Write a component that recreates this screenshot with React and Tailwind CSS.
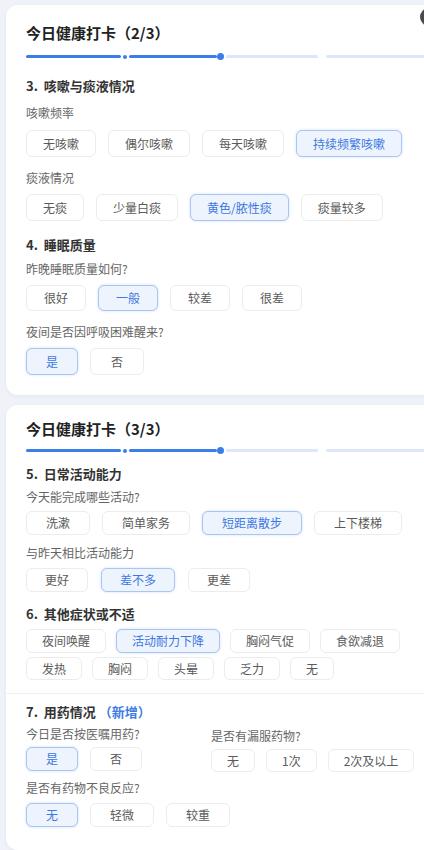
import React from "react";

const font = { fontFamily: '"Noto Sans CJK SC", "Noto Sans", sans-serif' };

// one option chip; pad carries the horizontal padding for that row
const Chip = ({ label, on, pad, h }) => (
  <div
    className={
      "flex items-center justify-center rounded-md border text-[12px] whitespace-nowrap " +
      pad +
      " " +
      h +
      (on
        ? " border-[#a8c5f4] bg-[#eef4fe] text-[#3d78e0] shadow-[0_0_3px_rgba(80,130,230,0.25)]"
        : " border-[#ececec] bg-white text-[#5a5a5a]")
    }
  >
    {label}
  </div>
);

const Progress = () => (
  <div className="flex items-center">
    <div className="w-[95px] h-[3px] rounded-full bg-[#3b7ee8]" />
    <div className="ml-[2px] w-[4px] h-[4px] rounded-full bg-[#3b7ee8]" />
    <div className="ml-[2px] w-[88px] h-[3px] rounded-full bg-[#3b7ee8]" />
    <div className="w-[7px] h-[7px] rounded-full bg-[#3b7ee8]" />
    <div className="ml-[2px] w-[93px] h-[3px] rounded-full bg-[#dde7f9]" />
    <div className="ml-[8px] w-[120px] h-[3px] rounded-full bg-[#dde7f9]" />
  </div>
);

const Heading = ({ children, className = "" }) => (
  <div className={"text-[13px] font-bold text-[#333] leading-[18px] " + className}>{children}</div>
);

const Label = ({ children, className = "" }) => (
  <div className={"text-[12px] text-[#666] leading-[18px] " + className}>{children}</div>
);

export default function App() {
  return (
    <div style={font} className="relative w-[424px] h-[850px] overflow-hidden bg-[#eff2f8]">
      <div className="absolute left-[420px] top-[8px] w-[18px] h-[18px] rounded-full bg-[#4a4a4a]" />

      {/* card 1 */}
      <div className="ml-[6px] mt-[5px] w-[440px] h-[390px] rounded-xl bg-white shadow-[0_1px_4px_rgba(0,0,0,0.05)] pl-[20px] pt-[17px]">
        <div className="text-[15px] font-bold text-[#222] leading-[22px]">今日健康打卡（2/3）</div>
        <div className="mt-[9px]">
          <Progress />
        </div>
        <Heading className="mt-[17px]">3.&nbsp; 咳嗽与痰液情况</Heading>
        <Label className="mt-[9px]">咳嗽频率</Label>
        <div className="mt-[8px] flex gap-3">
          {["无咳嗽", "偶尔咳嗽", "每天咳嗽", "持续频繁咳嗽"].map((t) => (
            <Chip key={t} label={t} on={t === "持续频繁咳嗽"} pad="px-[16px]" h="h-[27px]" />
          ))}
        </div>
        <Label className="mt-[12px]">痰液情况</Label>
        <div className="mt-[7px] flex gap-3">
          {["无痰", "少量白痰", "黄色/脓性痰", "痰量较多"].map((t) => (
            <Chip key={t} label={t} on={t === "黄色/脓性痰"} pad="px-[16px]" h="h-[27px]" />
          ))}
        </div>
        <Heading className="mt-[15px]">4.&nbsp; 睡眠质量</Heading>
        <Label className="mt-[6px]">昨晚睡眠质量如何?</Label>
        <div className="mt-[7px] flex gap-3">
          {["很好", "一般", "较差", "很差"].map((t) => (
            <Chip key={t} label={t} on={t === "一般"} pad="px-[17px]" h="h-[26px]" />
          ))}
        </div>
        <Label className="mt-[12px]">夜间是否因呼吸困难醒来?</Label>
        <div className="mt-[7px] flex gap-3">
          <Chip label="是" on pad="px-[19px]" h="h-[27px]" />
          <Chip label="否" pad="px-[20px]" h="h-[27px]" />
        </div>
      </div>

      {/* card 2 */}
      <div className="ml-[6px] mt-[10px] w-[440px] h-[445px] rounded-xl bg-white shadow-[0_1px_4px_rgba(0,0,0,0.05)] pt-[13px]">
        <div className="pl-[20px]">
          <div className="text-[15px] font-bold text-[#222] leading-[22px]">今日健康打卡（3/3）</div>
          <div className="mt-[7px]">
            <Progress />
          </div>
          <Heading className="mt-[11px]">5.&nbsp; 日常活动能力</Heading>
          <Label className="mt-[5px]">今天能完成哪些活动?</Label>
          <div className="mt-[5px] flex gap-[12px]">
            {["洗漱", "简单家务", "短距离散步", "上下楼梯"].map((t) => (
              <Chip key={t} label={t} on={t === "短距离散步"} pad="px-[19px]" h="h-[24px]" />
            ))}
          </div>
          <Label className="mt-[9px]">与昨天相比活动能力</Label>
          <div className="mt-[6px] flex gap-[13px]">
            {["更好", "差不多", "更差"].map((t) => (
              <Chip key={t} label={t} on={t === "差不多"} pad="px-[18px]" h="h-[24px]" />
            ))}
          </div>
          <Heading className="mt-[13px]">6.&nbsp; 其他症状或不适</Heading>
          <div className="mt-[6px] flex gap-[10px]">
            {["夜间唤醒", "活动耐力下降", "胸闷气促", "食欲减退"].map((t) => (
              <Chip key={t} label={t} on={t === "活动耐力下降"} pad="px-[15px]" h="h-[24px]" />
            ))}
          </div>
          <div className="mt-[4px] flex gap-[10px]">
            {["发热", "胸闷", "头晕", "乏力", "无"].map((t) => (
              <Chip key={t} label={t} pad="px-[15px]" h="h-[23px]" />
            ))}
          </div>
        </div>

        <div className="mt-[13px] border-t border-[#f1f1f1] pl-[20px] pt-[9px]">
          <Heading>
            7.&nbsp; 用药情况 <span className="text-[#3d7be6]">（新增）</span>
          </Heading>
          <div className="flex">
            <div className="w-[185px]">
              <Label className="mt-[4px]">今日是否按医嘱用药?</Label>
              <div className="mt-[4px] flex gap-[12px]">
                <Chip label="是" on pad="px-[19px]" h="h-[24px]" />
                <Chip label="否" pad="px-[19px]" h="h-[24px]" />
              </div>
            </div>
            <div>
              <Label className="mt-[6px]">是否有漏服药物?</Label>
              <div className="mt-[4px] flex gap-[11px]">
                {["无", "1次", "2次及以上"].map((t) => (
                  <Chip key={t} label={t} pad="px-[15px]" h="h-[23px]" />
                ))}
              </div>
            </div>
          </div>
          <Label className="mt-[7px]">是否有药物不良反应?</Label>
          <div className="mt-[6px] flex gap-[12px]">
            <Chip label="无" on pad="px-[19px]" h="h-[24px]" />
            <Chip label="轻微" pad="px-[19px]" h="h-[24px]" />
            <Chip label="较重" pad="px-[19px]" h="h-[24px]" />
          </div>
        </div>
      </div>
    </div>
  );
}
